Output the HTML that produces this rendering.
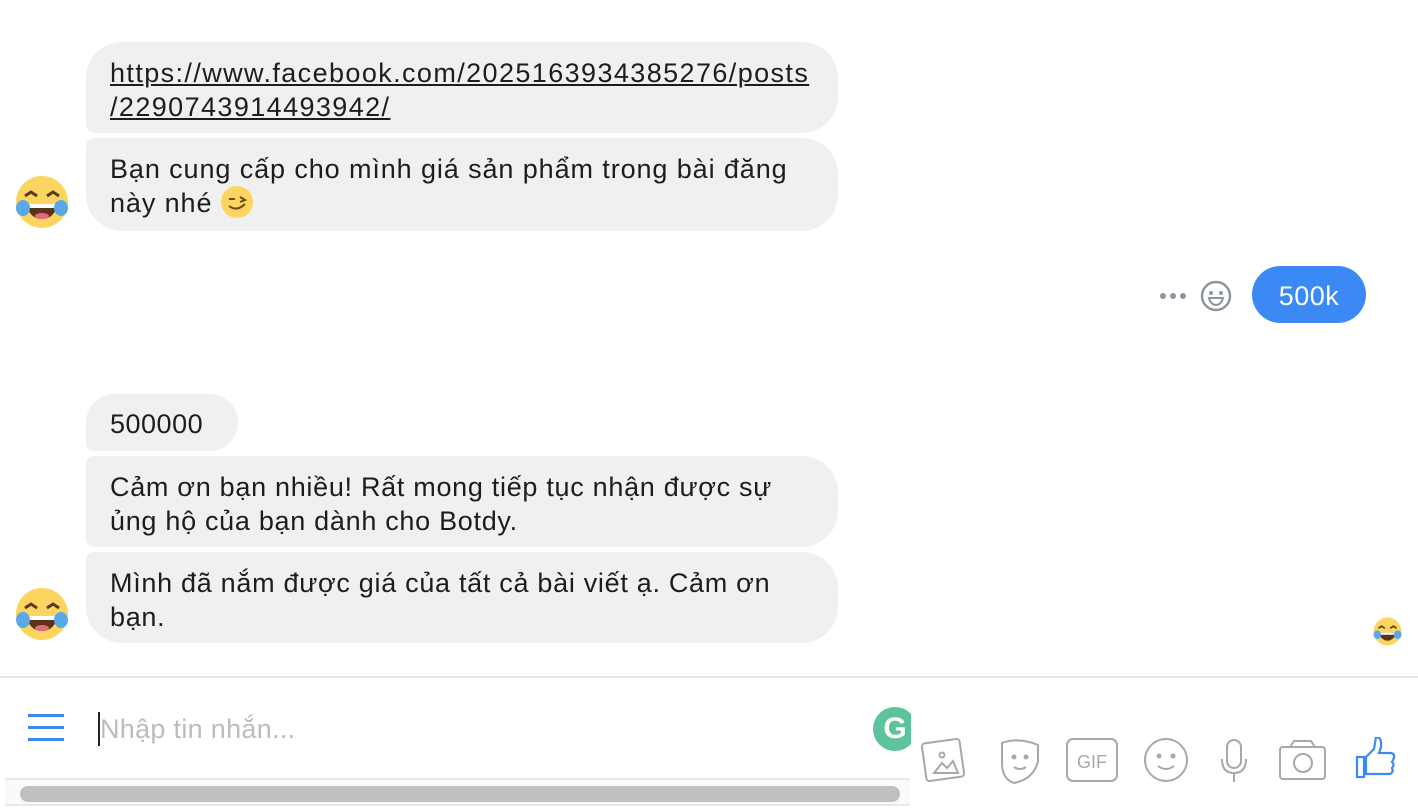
<!DOCTYPE html>
<html><head><meta charset="utf-8"><style>
body{margin:0;width:1418px;height:808px;background:#fff;font-family:"Liberation Sans",sans-serif;position:relative;overflow:hidden;color:#1d1d1f}
.b{position:absolute;background:#f0f0f0;font-size:27px;letter-spacing:1px;line-height:34px;padding:0 24px;box-sizing:border-box;white-space:nowrap}
a{color:#1d1d1f;text-decoration:underline;letter-spacing:1.4px}
</style></head><body>
<div class="b" style="left:86px;top:42px;width:752px;height:91px;border-radius:36px 36px 36px 8px;padding-top:14px"><a>https://www.facebook.com/2025163934385276/posts<br>/2290743914493942/</a></div>
<div class="b" style="left:86px;top:138px;width:752px;height:93px;border-radius:8px 36px 36px 36px;padding-top:14px;letter-spacing:0.9px">Bạn cung cấp cho mình giá sản phẩm trong bài đăng<br>này nhé <span style="display:inline-block;width:32px;height:32px;border-radius:50%;background:#fbd55f;vertical-align:-6px;position:relative"><svg width="32" height="32" style="position:absolute;left:0;top:0"><path d="M8 13h6M19 11l5 3-5 2M8 20q8 6 16 -2" stroke="#6b4a1a" stroke-width="2" fill="none"/></svg></span></div>

<svg style="position:absolute;left:15px;top:175px" width="54" height="54" viewBox="0 0 54 54"><circle cx="27" cy="27" r="26" fill="#fbd55f"/><path d="M10 21l6-4 6 4M32 21l6-4 6 4" stroke="#5a3a1a" stroke-width="3" fill="none"/><path d="M11 29h32q-4 15-16 15T11 29z" fill="#5a3318"/><path d="M12 29h30v4H12z" fill="#fff"/><ellipse cx="27" cy="41" rx="7" ry="3" fill="#e06a80"/><ellipse cx="8" cy="33" rx="7" ry="8" fill="#5aa8e8"/><ellipse cx="46" cy="33" rx="7" ry="8" fill="#5aa8e8"/></svg>

<div style="position:absolute;left:1160px;top:293px;font-size:0">
<span style="display:inline-block;width:6px;height:6px;border-radius:50%;background:#8d949e;margin-right:4px"></span><span style="display:inline-block;width:6px;height:6px;border-radius:50%;background:#8d949e;margin-right:4px"></span><span style="display:inline-block;width:6px;height:6px;border-radius:50%;background:#8d949e"></span></div>
<svg style="position:absolute;left:1200px;top:280px" width="32" height="32" viewBox="0 0 32 32"><circle cx="16" cy="16" r="14" stroke="#8d949e" stroke-width="2.4" fill="none"/><circle cx="11" cy="13" r="2" fill="#8d949e"/><circle cx="21" cy="13" r="2" fill="#8d949e"/><path d="M9 18h14q-2 7-7 7t-7-7z" stroke="#8d949e" stroke-width="2" fill="none"/></svg>
<div style="position:absolute;left:1252px;top:266px;width:114px;height:57px;border-radius:29px;background:#3a89f5;color:#fff;font-size:27px;letter-spacing:0.5px;line-height:61px;text-align:center">500k</div>

<div class="b" style="left:86px;top:394px;width:152px;height:57px;border-radius:29px 29px 29px 8px;line-height:61px;letter-spacing:0.5px">500000</div>
<div class="b" style="left:86px;top:456px;width:752px;height:91px;border-radius:8px 36px 36px 8px;padding-top:14px;letter-spacing:0.7px">Cảm ơn bạn nhiều! Rất mong tiếp tục nhận được sự<br>ủng hộ của bạn dành cho Botdy.</div>
<div class="b" style="left:86px;top:552px;width:752px;height:91px;border-radius:8px 36px 36px 36px;padding-top:14px;letter-spacing:0.7px">Mình đã nắm được giá của tất cả bài viết ạ. Cảm ơn<br>bạn.</div>

<svg style="position:absolute;left:15px;top:587px" width="54" height="54" viewBox="0 0 54 54"><circle cx="27" cy="27" r="26" fill="#fbd55f"/><path d="M10 21l6-4 6 4M32 21l6-4 6 4" stroke="#5a3a1a" stroke-width="3" fill="none"/><path d="M11 29h32q-4 15-16 15T11 29z" fill="#5a3318"/><path d="M12 29h30v4H12z" fill="#fff"/><ellipse cx="27" cy="41" rx="7" ry="3" fill="#e06a80"/><ellipse cx="8" cy="33" rx="7" ry="8" fill="#5aa8e8"/><ellipse cx="46" cy="33" rx="7" ry="8" fill="#5aa8e8"/></svg>
<svg style="position:absolute;left:1373px;top:617px" width="29" height="29" viewBox="0 0 54 54"><circle cx="27" cy="27" r="26" fill="#fbd55f"/><path d="M10 21l6-4 6 4M32 21l6-4 6 4" stroke="#5a3a1a" stroke-width="3" fill="none"/><path d="M11 29h32q-4 15-16 15T11 29z" fill="#5a3318"/><path d="M12 29h30v4H12z" fill="#fff"/><ellipse cx="8" cy="33" rx="7" ry="8" fill="#5aa8e8"/><ellipse cx="46" cy="33" rx="7" ry="8" fill="#5aa8e8"/></svg>

<div style="position:absolute;left:0;top:676px;width:1418px;height:2px;background:#e4e4e4"></div>
<div style="position:absolute;left:28px;top:714px;width:36px;height:3px;background:#3a89f5"></div>
<div style="position:absolute;left:28px;top:726px;width:36px;height:3px;background:#3a89f5"></div>
<div style="position:absolute;left:28px;top:738px;width:36px;height:3px;background:#3a89f5"></div>
<div style="position:absolute;left:98px;top:712px;width:2px;height:34px;background:#222"></div>
<div style="position:absolute;left:100px;top:714px;font-size:27px;letter-spacing:0.3px;color:#bcbcbc">Nhập tin nhắn...</div>
<div style="position:absolute;left:873px;top:707px;width:44px;height:44px;border-radius:50%;background:#5cc39d;color:#fff;font-size:30px;font-weight:bold;line-height:44px;text-align:center;clip-path:inset(0 6px 0 0)">G</div>
<div style="position:absolute;left:5px;top:778px;width:905px;height:28px;background:#fafafa;border-top:2px solid #e8e8e8;border-bottom:2px solid #e8e8e8;box-sizing:border-box"></div>
<div style="position:absolute;left:20px;top:786px;width:880px;height:16px;border-radius:8px;background:#c0c0c0"></div>

<svg style="position:absolute;left:920px;top:735px" width="500" height="50" viewBox="0 0 500 50" fill="none" stroke="#a8a8a8" stroke-width="2">
<rect x="4" y="6" width="38" height="38" rx="3" transform="rotate(-8 23 25)"/><path d="M14 38l8-10 5 5 6-7 5 12z"/><circle cx="22" cy="20" r="2.5"/>
<path d="M82 8q16-6 36 2v16q-4 18-24 22q-12-4-12-20z"/><circle cx="94" cy="22" r="1.5" fill="#a8a8a8"/><circle cx="106" cy="22" r="1.5" fill="#a8a8a8"/><path d="M94 32q6 4 12 0"/>
<rect x="147" y="4" width="50" height="42" rx="6"/><text x="172" y="33" font-family="Liberation Sans" font-size="18" fill="#a8a8a8" stroke="none" text-anchor="middle">GIF</text>
<circle cx="246" cy="25" r="21"/><circle cx="239" cy="21" r="1.5" fill="#a8a8a8"/><circle cx="253" cy="21" r="1.5" fill="#a8a8a8"/><path d="M238 31q8 6 16 0"/>
<rect x="307" y="5" width="14" height="28" rx="7"/><path d="M302 24q0 14 12 14t12-14M314 38v9"/>
<rect x="360" y="12" width="45" height="32" rx="3"/><path d="M370 12l4-6h17l4 6"/><circle cx="383" cy="28" r="9"/>
</svg>
<svg style="position:absolute;left:1354px;top:737px" width="44" height="44" viewBox="0 0 44 44" fill="none" stroke="#3a89f5" stroke-width="2.2"><rect x="3" y="20" width="7" height="20"/><path d="M12 20l8-8 2-12q6 0 5 10l-2 6h12q4 1 3 5l-2 4q3 2 0 6q2 4-2 6h-24z"/></svg>
</body></html>
